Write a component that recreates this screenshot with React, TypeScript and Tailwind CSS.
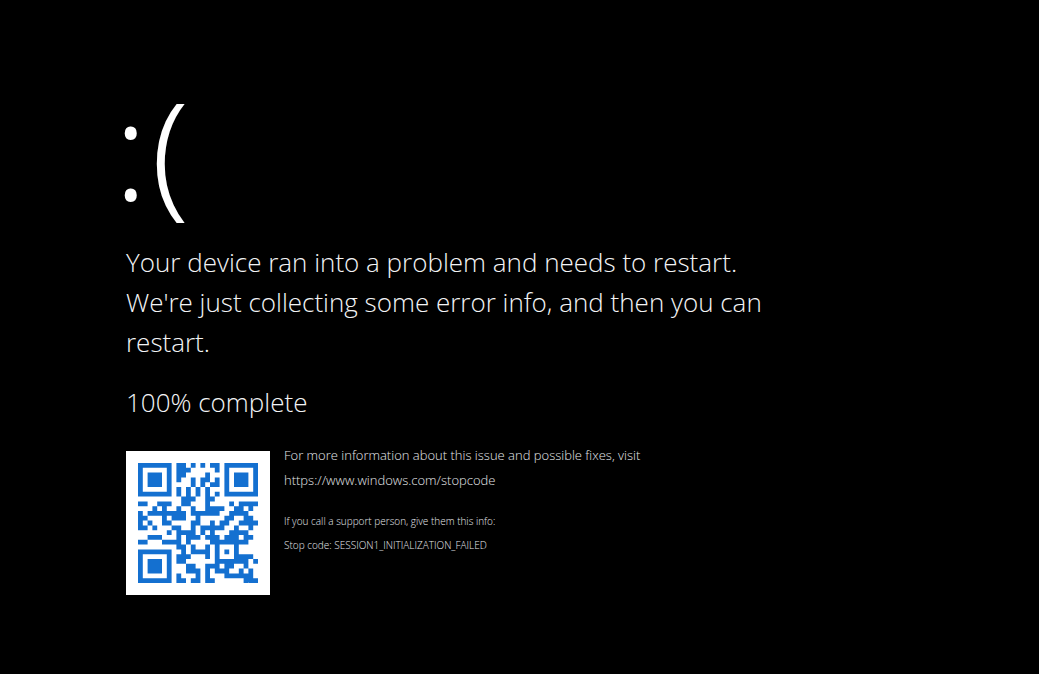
const STOP_URL = 'https://www.windows.com/stopcode';

const QR_ROWS = [
  '#######.##.#.#.##.#######',
  '#.....#.###.....#.#.....#',
  '#.###.#.##....#...#.###.#',
  '#.###.#.#..#.##.#.#.###.#',
  '#.###.#....#.#.##.#.###.#',
  '#.....#.#.#.#.#...#.....#',
  '#######.#.#.#.#.#.#######',
  '.........###..##.........',
  '##..###..##...#....#.####',
  '...#.#..#..#..####..##.#.',
  '#.########.######..####..',
  '##...#.###..#.....##..##.',
  '#.#..##....##..#.##..####',
  '##.#...##..#.#####..#..#.',
  '......#.####.#.#...####..',
  '..###...#.###.###.###.##.',
  '##...####.#....########..',
  '........##.#..#.#...#....',
  '#######..#.####.#.#.#....',
  '#.....#.###...#.#...####.',
  '#.###.#.##......#######.#',
  '#.###.#...##..###.##..#..',
  '#.###.#...###.#.###..#.#.',
  '#.....#.#...#.#...######.',
  '#######.##.##.##......###',
];

const qrPath = QR_ROWS.flatMap((row, y) =>
  [...row].map((cell, x) => (cell === '#' ? `M${x} ${y}h1v1h-1z` : ''))
).join('');

function QrCode() {
  return (
    <div className="size-36 shrink-0 bg-white p-3">
      <svg viewBox="0 0 25 25" className="size-full fill-[#1470d0]" role="img" aria-label={STOP_URL}>
        <path d={qrPath} />
      </svg>
    </div>
  );
}

export default function App() {
  return (
    <main className="min-h-screen bg-black px-[126px] pt-[60px] pb-16 font-['Open_Sans',sans-serif] font-light text-gray-100">
      <h1 className="-ml-3 mb-1 flex gap-1 font-['Noto_Sans',sans-serif] text-[136px] leading-[178px] text-white">
        <span>:</span>
        <span>(</span>
      </h1>

      <p className="max-w-[660px] text-[26px] leading-10">
        Your device ran into a problem and needs to restart. We're just collecting some error info, and then you can
        restart.
      </p>
      <p className="mt-5 text-[26px] leading-10">100% complete</p>

      {/* Support details */}
      <div className="mt-[29px] flex gap-3.5">
        <QrCode />
        <div className="-mt-2 text-[10px] leading-6 text-gray-200">
          <div className="mb-4 text-[13px] leading-[25px]">
            <p>For more information about this issue and possible fixes, visit</p>
            <a href={STOP_URL}>{STOP_URL}</a>
          </div>
          <p>If you call a support person, give them this info:</p>
          <p>Stop code: SESSION1_INITIALIZATION_FAILED</p>
        </div>
      </div>
    </main>
  );
}
